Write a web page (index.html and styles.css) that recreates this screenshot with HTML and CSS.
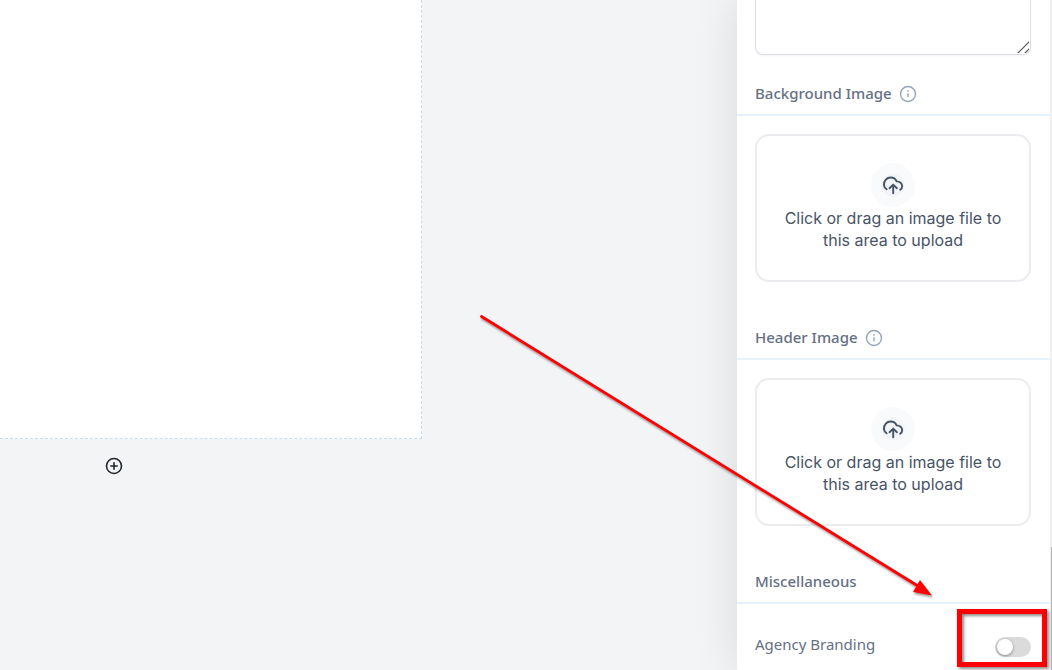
FILE: index.html
```
<!DOCTYPE html>
<html lang="en">
<head>
  <meta charset="UTF-8">
  <title>Form Builder</title>
  <meta name="viewport" content="width=device-width, initial-scale=1.0">
  <link rel="stylesheet" href="styles.css">
</head>
<body>

  <div class="builder">
    <main class="canvas">
      <div class="page"></div>
      <button class="add-section" type="button" aria-label="Add section">
        <svg width="18" height="18" viewBox="0 0 18 18" fill="none" stroke="#23272e" stroke-width="1.6" stroke-linecap="round">
          <circle cx="9" cy="9" r="7.5"/>
          <path d="M9 5.8v6.4M5.8 9h6.4"/>
        </svg>
      </button>
    </main>

    <aside class="panel">
      <textarea class="custom-css" aria-label="Custom CSS"></textarea>

      <section>
        <h3 class="heading">Background Image
          <svg class="info" width="18" height="18" viewBox="0 0 18 18" fill="none" stroke="#94a3b8" stroke-width="1.4">
            <circle cx="9" cy="9" r="7.5"/>
            <path d="M9 8.3v4M9 5.3v1.4"/>
          </svg>
        </h3>
        <button class="upload" type="button">
          <span class="upload-icon">
            <svg width="24" height="24" viewBox="0 0 24 24" fill="none" stroke="#475467" stroke-width="1.9" stroke-linecap="round" stroke-linejoin="round">
              <path d="M5.6 16.2A5.4 5.4 0 0 1 3 11.4C3 7.8 5.7 4.5 9.6 4.5c2.9 0 5 1.5 6 3.9 3.3-.1 5.6 2 5.6 4.8 0 1.5-.8 2.8-2 3.6"/>
              <path d="M8.5 15.2l3.7-3.6 3.7 3.6M12.2 11.8v8.4"/>
            </svg>
          </span>
          <span class="upload-text">Click or drag an image file to this area to upload</span>
        </button>
      </section>

      <section>
        <h3 class="heading">Header Image
          <svg class="info" width="18" height="18" viewBox="0 0 18 18" fill="none" stroke="#94a3b8" stroke-width="1.4">
            <circle cx="9" cy="9" r="7.5"/>
            <path d="M9 8.3v4M9 5.3v1.4"/>
          </svg>
        </h3>
        <button class="upload" type="button">
          <span class="upload-icon">
            <svg width="24" height="24" viewBox="0 0 24 24" fill="none" stroke="#475467" stroke-width="1.9" stroke-linecap="round" stroke-linejoin="round">
              <path d="M5.6 16.2A5.4 5.4 0 0 1 3 11.4C3 7.8 5.7 4.5 9.6 4.5c2.9 0 5 1.5 6 3.9 3.3-.1 5.6 2 5.6 4.8 0 1.5-.8 2.8-2 3.6"/>
              <path d="M8.5 15.2l3.7-3.6 3.7 3.6M12.2 11.8v8.4"/>
            </svg>
          </span>
          <span class="upload-text">Click or drag an image file to this area to upload</span>
        </button>
      </section>

      <section>
        <h3 class="heading">Miscellaneous</h3>
        <div class="setting">
          <label for="branding">Agency Branding</label>
          <span class="toggle">
            <input type="checkbox" id="branding" class="switch">
            <span class="highlight"></span>
          </span>
        </div>
      </section>

      <span class="scroll-thumb"></span>
    </aside>
  </div>

  <!-- arrow pointing at the branding switch -->
  <svg class="arrow" width="460" height="290" viewBox="0 0 460 290">
    <path d="M5.500 4.500L442 274" stroke="#f00" stroke-width="2.8" stroke-linecap="round"/>
    <path d="M456 283.500L437 280L444 268Z" fill="#f00"/>
  </svg>

</body>
</html>
```

FILE: styles.css
```
:root {
  --text: #667085;
  --dark: #475467;
  --line: #e6f3fe;
  --border: #eaecf0;
}

* {
  box-sizing: border-box;
}

body {
  margin: 0;
  font-family: "Noto Sans", sans-serif;
  font-size: 15px;
  color: var(--text);
  background: #f2f4f6;
}

.builder {
  display: flex;
  height: 100vh;
  overflow: hidden;
}

.canvas {
  flex: 1;
}

.page {
  width: 422px;
  height: 439px;
  background: #fff;
  border: 1px dashed #c5dff0;
  border-width: 0 1px 1px 0;
}

.add-section {
  display: block;
  width: 18px;
  height: 18px;
  margin: 18px 0 0 105px;
  padding: 0;
  border: 0;
  background: none;
  cursor: pointer;
}

.panel {
  position: relative;
  width: 315px;
  background: #fff;
  border-right: 2px solid #f1f1f1;
  box-shadow: 0 0 44px rgba(0, 0, 0, 0.11);
}

.custom-css {
  display: block;
  width: 276px;
  height: 55px;
  margin: 0 18px;
  border: 1px solid #dcdfe6;
  border-top: 0;
  border-radius: 0 0 8px 8px;
  box-shadow: 0 1px 2px rgba(16, 24, 40, 0.05);
  resize: both;
}

.custom-css::-webkit-resizer {
  background: linear-gradient(135deg,
    transparent 11px, #555 12px, transparent 13px,
    transparent 16px, #555 17px, transparent 18px) 0 0 / 14px 14px no-repeat;
}

.heading {
  display: flex;
  align-items: center;
  gap: 7px;
  margin: 0;
  padding: 25px 18px 8px;
  border-bottom: 2px solid var(--line);
  font-size: 15px;
  font-weight: 500;
  line-height: 26px;
}

section + section .heading {
  padding-top: 42px;
}

.info {
  position: relative;
  top: 1px;
}

.upload {
  display: flex;
  flex-direction: column;
  align-items: center;
  width: 276px;
  height: 148px;
  margin: 18px 18px 0;
  padding: 27px 20px 0;
  border: 2px solid var(--border);
  border-radius: 14px;
  background: #fff;
  color: var(--dark);
  font: 16px/22px Inter, sans-serif;
  cursor: pointer;
}

.upload-icon {
  display: flex;
  align-items: center;
  justify-content: center;
  width: 44px;
  height: 44px;
  border-radius: 50%;
  background: radial-gradient(circle, #f2f4f7 11px, #f9fafb 12px);
}

.setting {
  display: flex;
  align-items: flex-start;
  justify-content: space-between;
  padding: 29px 19px 0 18px;
  line-height: 22px;
}

.toggle {
  position: relative;
  padding-top: 4px;
}

.switch {
  appearance: none;
  display: block;
  width: 36px;
  height: 20px;
  margin: 0;
  padding: 2px;
  border-radius: 10px;
  background: #dbdbdb;
}

.switch::before {
  content: "";
  display: block;
  width: 16px;
  height: 16px;
  border-radius: 50%;
  background: #fff;
  box-shadow: 0 1px 3px rgba(0, 0, 0, 0.4);
}

.switch:checked {
  background: #155eef;
}

.switch:checked::before {
  margin-left: auto;
}

.highlight {
  position: absolute;
  top: -24px;
  right: -16px;
  width: 90px;
  height: 58px;
  border: 5px solid #f00;
  box-shadow: 2px 2px 3px rgba(0, 0, 0, 0.45), inset 2px 2px 3px rgba(0, 0, 0, 0.45);
  pointer-events: none;
}

.scroll-thumb {
  position: absolute;
  top: 547px;
  right: -2px;
  bottom: 0;
  width: 1px;
  background: #b5b5b5;
}

.arrow {
  position: absolute;
  top: 312px;
  left: 476px;
  filter: drop-shadow(1px 2px 1px rgba(0, 0, 0, 0.4));
  pointer-events: none;
}
```
